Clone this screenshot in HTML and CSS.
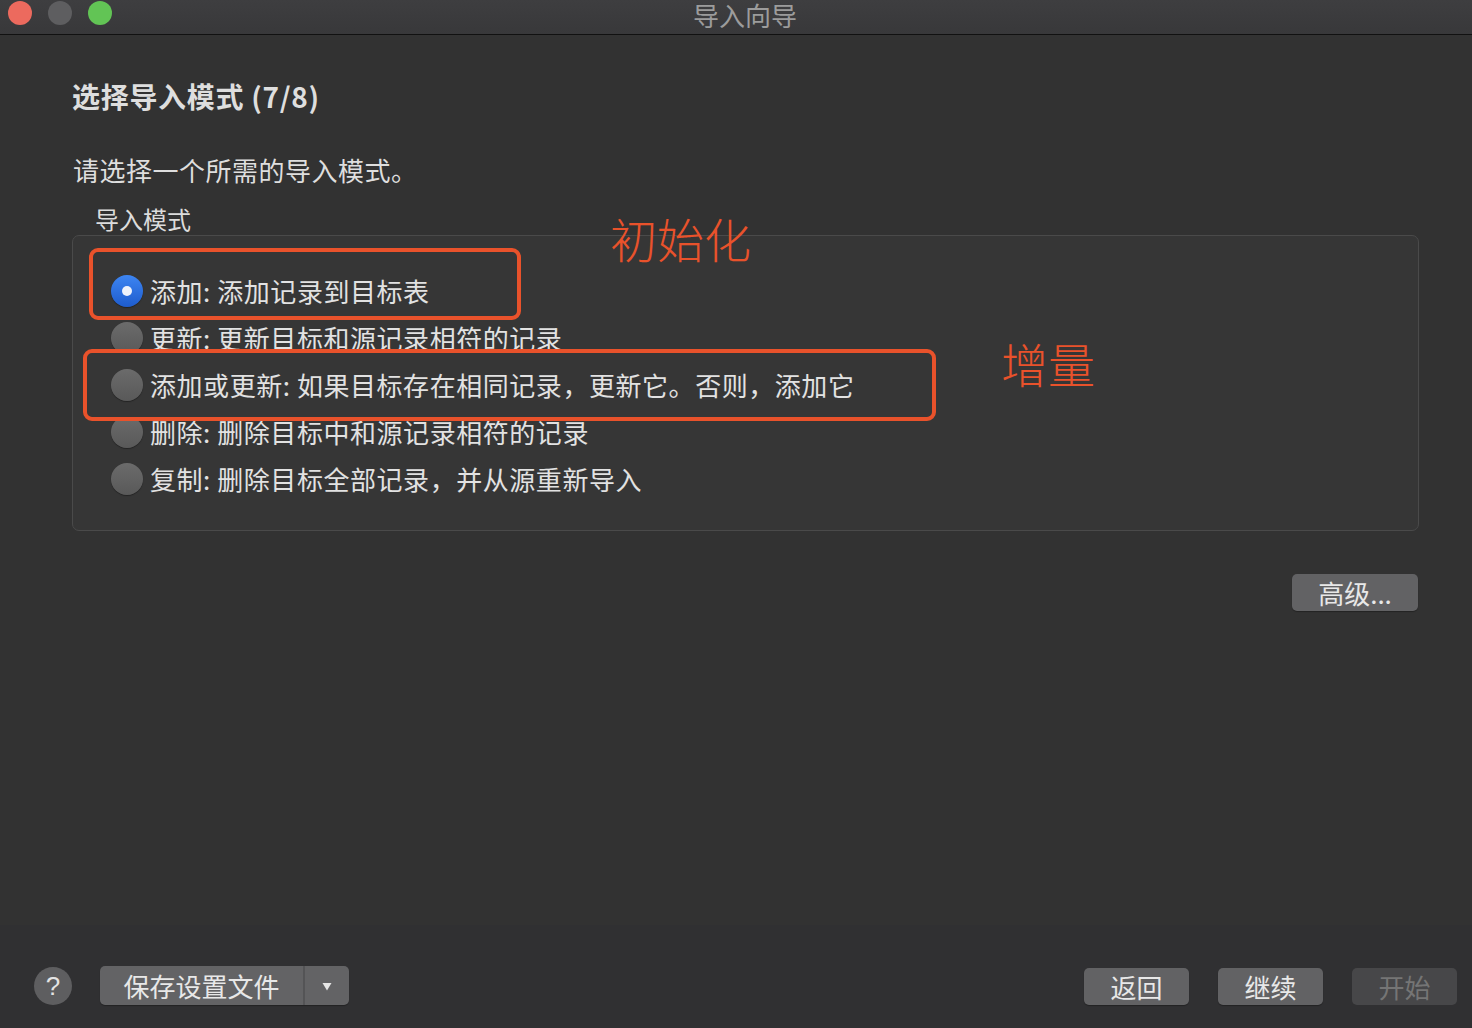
FILE: index.html
```html
<!DOCTYPE html>
<html lang="zh-CN">
<head>
<meta charset="utf-8">
<title>导入向导</title>
<link rel="stylesheet" href="styles.css">
</head>
<body>
<div class="window">
  <header class="titlebar">
    <div class="lights">
      <span class="light red"></span>
      <span class="light gray"></span>
      <span class="light green"></span>
    </div>
    <div class="title">导入向导</div>
    <div></div>
  </header>

  <main class="content">
    <h1 class="heading">选择导入模式 (7/8)</h1>
    <p class="subtitle">请选择一个所需的导入模式。</p>
    <div class="group-label">导入模式</div>
    <div class="group">
      <div class="mark box1"></div>
      <div class="mark box2"></div>
      <div class="note note1">初始化</div>
      <div class="note note2">增量</div>
      <div class="row front"><span class="radio on"></span><span class="label">添加: 添加记录到目标表</span></div>
      <div class="row"><span class="radio"></span><span class="label">更新: 更新目标和源记录相符的记录</span></div>
      <div class="row front"><span class="radio"></span><span class="label">添加或更新: 如果目标存在相同记录，更新它。否则，添加它</span></div>
      <div class="row"><span class="radio"></span><span class="label">删除: 删除目标中和源记录相符的记录</span></div>
      <div class="row"><span class="radio"></span><span class="label">复制: 删除目标全部记录，并从源重新导入</span></div>
    </div>
    <div class="adv-row"><button class="btn adv">高级...</button></div>
  </main>

  <footer class="footer">
    <div class="help">?</div>
    <div class="split">
      <span class="split-main">保存设置文件</span>
      <span class="split-arrow"><svg width="10" height="9" viewBox="0 0 10 9"><path d="M0.5 1 L9.5 1 L5 8.5 Z" fill="#e6e6e6"/></svg></span>
    </div>
    <div class="spacer"></div>
    <button class="btn nav">返回</button>
    <button class="btn nav">继续</button>
    <button class="btn nav disabled">开始</button>
  </footer>
</div>
</body>
</html>
```
FILE: styles.css
```css
* { box-sizing: border-box; }
html, body {
  margin: 0;
  padding: 0;
  background: #323232;
}
body {
  font-family: "Noto Sans CJK SC", "Noto Sans", "Liberation Sans", sans-serif;
  color: #e0e0e0;
}
.window {
  width: 1472px;
  height: 1028px;
  display: flex;
  flex-direction: column;
  overflow: hidden;
  background: #323232;
}
.titlebar {
  height: 35px;
  flex: none;
  display: grid;
  grid-template-columns: 1fr auto 1fr;
  background: linear-gradient(#3e3e40, #38383a);
  border-bottom: 1px solid #111;
}
.lights {
  display: flex;
  gap: 16px;
  padding: 1px 0 0 8px;
}
.light {
  width: 24px;
  height: 24px;
  border-radius: 50%;
}
.light.red { background: #ec6a5e; }
.light.gray { background: #5e5e60; }
.light.green { background: #62c455; }
.title {
  margin-left: 18px;
  font-size: 26px;
  line-height: 30px;
  color: #9c9c9c;
}
.content {
  flex: 1;
  padding: 43px 53px 0 72px;
}
.heading {
  margin: 0;
  font-size: 28px;
  line-height: 36px;
  font-weight: 700;
  color: #dedede;
  letter-spacing: 0.7px;
}
.subtitle {
  margin: 39px 0 0 1px;
  font-size: 26px;
  line-height: 34px;
  color: #dedede;
  letter-spacing: 0.5px;
}
.group-label {
  margin: 17px 0 0 23px;
  font-size: 24px;
  line-height: 30px;
  color: #dcdcdc;
}
.group {
  position: relative;
  margin-top: 1px;
  height: 296px;
  background: #363636;
  border: 1px solid #4a4a4a;
  border-radius: 7px;
  padding: 32px 0 0 38px;
  display: flex;
  flex-direction: column;
}
.row {
  height: 46.8px;
  flex: none;
  display: flex;
  align-items: center;
  gap: 7px;
}
.row.front {
  position: relative;
  z-index: 2;
}
.radio {
  width: 32px;
  height: 32px;
  border-radius: 50%;
  flex: none;
  background: linear-gradient(#6b6b6b, #595959);
  box-shadow: 0 1px 1px rgba(0,0,0,0.35);
  position: relative;
}
.radio.on {
  background: linear-gradient(#3d85f2, #1e5ccd);
}
.radio.on::after {
  content: "";
  position: absolute;
  left: 11px;
  top: 11px;
  width: 10px;
  height: 10px;
  border-radius: 50%;
  background: #eef2fb;
}
.label {
  font-size: 26px;
  line-height: 34px;
  color: #e2e2e2;
  letter-spacing: 0.55px;
  white-space: nowrap;
}
.mark {
  position: absolute;
  z-index: 1;
  border: 4px solid #e9522b;
  border-radius: 9px;
  background: #363636;
}
.box1 { left: 16px; top: 12px; width: 432px; height: 72px; }
.box2 { left: 10px; top: 113px; width: 853px; height: 72px; }
.note {
  position: absolute;
  z-index: 3;
  color: #e9522b;
  font-size: 47px;
  line-height: 56px;
  font-weight: 300;
  white-space: nowrap;
}
.note1 { left: 537px; top: -26px; }
.note2 { left: 928px; top: 99px; }
.adv-row {
  display: flex;
  justify-content: flex-end;
  margin-top: 43px;
  padding-right: 1px;
}
.btn {
  font-family: inherit;
  border: none;
  padding: 0;
  margin: 0;
  background: #626264;
  color: #e8e8e8;
  border-radius: 5px;
  font-size: 26px;
  line-height: 37px;
  height: 37px;
  box-shadow: 0 1px 1px rgba(0,0,0,0.3);
}
.adv { width: 126px; }
.footer {
  flex: none;
  height: 103px;
  background: #303032;
  display: flex;
  align-items: flex-start;
  padding: 41px 15px 0 34px;
}
.help {
  width: 38px;
  height: 38px;
  margin-top: 1px;
  border-radius: 50%;
  background: #5e5e60;
  color: #e4e4e4;
  font-family: "Liberation Sans", sans-serif;
  font-size: 26px;
  line-height: 38px;
  text-align: center;
}
.split {
  margin-left: 28px;
  width: 249px;
  height: 39px;
  display: flex;
  background: #636365;
  border-radius: 5px;
  box-shadow: 0 1px 1px rgba(0,0,0,0.3);
}
.split-main {
  width: 205px;
  text-align: center;
  font-size: 26px;
  line-height: 39px;
  color: #e8e8e8;
  border-right: 2px solid #545456;
}
.split-arrow {
  flex: 1;
  display: flex;
  align-items: center;
  justify-content: center;
  padding-top: 2px;
}
.spacer { flex: 1; }
.nav {
  width: 105px;
  margin-top: 2px;
  margin-left: 29px;
}
.nav.disabled {
  background: #474749;
  color: #757575;
  box-shadow: none;
}
```
